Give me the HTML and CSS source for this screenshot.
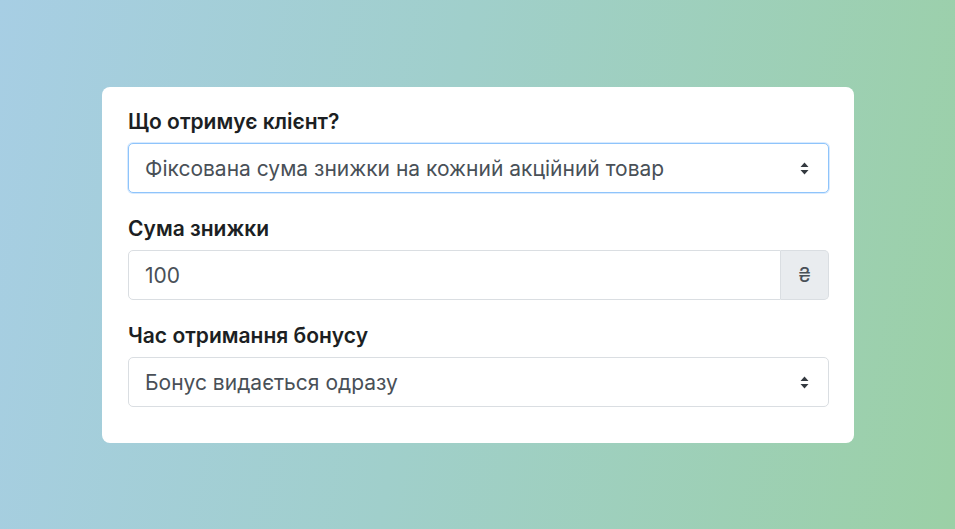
FILE: index.html
```html
<!DOCTYPE html>
<html lang="uk">
<head>
<meta charset="utf-8">
<link rel="stylesheet" href="styles.css">
</head>
<body>
<main class="page">
  <form class="card">
    <div class="field">
      <label class="label" for="s1">Що отримує клієнт?</label>
      <div class="select-wrap">
        <select id="s1" class="control select focused">
          <option>Фіксована сума знижки на кожний акційний товар</option>
        </select>
        <svg class="arrow" width="9" height="13" viewBox="0 0 9 13"><path d="M4.5 0.5 L8.5 5 H0.5 Z M0.5 8 H8.5 L4.5 12.5 Z" fill="#343a40"/></svg>
      </div>
    </div>
    <div class="field">
      <label class="label" for="i1">Сума знижки</label>
      <div class="group">
        <input id="i1" class="control input" value="100">
        <span class="addon">₴</span>
      </div>
    </div>
    <div class="field">
      <label class="label" for="s2">Час отримання бонусу</label>
      <div class="select-wrap">
        <select id="s2" class="control select">
          <option>Бонус видається одразу</option>
        </select>
        <svg class="arrow" width="9" height="13" viewBox="0 0 9 13"><path d="M4.5 0.5 L8.5 5 H0.5 Z M0.5 8 H8.5 L4.5 12.5 Z" fill="#343a40"/></svg>
      </div>
    </div>
  </form>
</main>
</body>
</html>
```

FILE: styles.css
```css
* { box-sizing: border-box; }
html, body { margin: 0; height: 100%; }
body {
  font-family: Inter, "Liberation Sans", Arial, sans-serif;
  background: linear-gradient(100deg, #a7cee4 0%, #a0cfcb 45%, #9bd0a6 100%);
}
.page {
  height: 529px;
  padding: 87px 101px 0 102px;
}
.card {
  background: #fff;
  border-radius: 8px;
  width: 752px;
  padding: 23px 25px 36px 26px;
  display: flex;
  flex-direction: column;
  gap: 24px;
}
.field { display: flex; flex-direction: column; gap: 9px; }
.label {
  font-size: 21px;
  font-weight: 600;
  color: #1c1f23;
  line-height: 24px;
}
.control {
  display: block;
  width: 100%;
  height: 50px;
  margin: 0;
  font-family: inherit;
  font-size: 21px;
  color: #495057;
  background: #fff;
  border: 1px solid #dadee2;
  border-radius: 5px;
  padding: 0 40px 0 16px;
  outline: none;
}
.select { appearance: none; -webkit-appearance: none; }
.focused { border-color: #8ec4fb; box-shadow: 0 0 0 1px rgba(142,196,251,0.35); }
.select-wrap { position: relative; }
.arrow { position: absolute; right: 20px; top: 19px; pointer-events: none; }
.group { display: flex; }
.input { border-radius: 5px 0 0 5px; flex: 1; }
.addon {
  width: 48px;
  height: 50px;
  display: flex;
  align-items: center;
  justify-content: center;
  background: #e9ecef;
  border: 1px solid #dadee2;
  border-left: none;
  border-radius: 0 5px 5px 0;
  color: #495057;
  font-size: 20px;
}
```
